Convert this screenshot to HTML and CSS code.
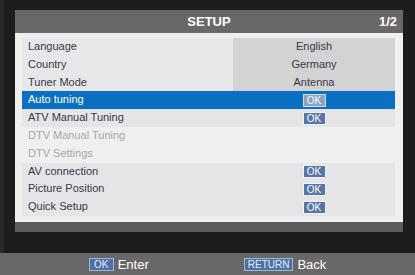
FILE: index.html
```html
<!DOCTYPE html>
<html lang="en">
<head>
    <meta charset="UTF-8">
    <title>SETUP</title>
    <link rel="stylesheet" href="styles.css">
</head>
<body>
    <div class="screen">
        <div class="panel">
            <div class="panel-head">
                <span></span>
                <span class="title">SETUP</span>
                <span class="page">1/2</span>
            </div>
            <div class="panel-body">
                <div class="row value"><span class="label">Language</span><span class="val">English</span></div>
                <div class="row value"><span class="label">Country</span><span class="val">Germany</span></div>
                <div class="row value"><span class="label">Tuner Mode</span><span class="val">Antenna</span></div>
                <div class="row action active"><span class="label">Auto tuning</span><span class="val"><span class="ok">OK</span></span></div>
                <div class="row action"><span class="label">ATV Manual Tuning</span><span class="val"><span class="ok">OK</span></span></div>
                <div class="row disabled"><span class="label">DTV Manual Tuning</span><span class="val"></span></div>
                <div class="row disabled"><span class="label">DTV Settings</span><span class="val"></span></div>
                <div class="row action"><span class="label">AV connection</span><span class="val"><span class="ok">OK</span></span></div>
                <div class="row action"><span class="label">Picture Position</span><span class="val"><span class="ok">OK</span></span></div>
                <div class="row action"><span class="label">Quick Setup</span><span class="val"><span class="ok">OK</span></span></div>
            </div>
            <div class="panel-foot"></div>
        </div>
    </div>
    <div class="hints">
        <div class="hint"><span class="key">OK</span> Enter</div>
        <div class="hint"><span class="key">RETURN</span> Back</div>
    </div>
</body>
</html>
```

FILE: styles.css
```css
body {
    margin: 0;
    width: 415px;
    height: 275px;
    overflow: hidden;
    background: #1d1d1d;
    font-family: "Liberation Sans", Arial, sans-serif;
}
.screen {
    height: 253px;
    box-sizing: border-box;
    padding: 10px 0 0 11px;
    border-left: 4px solid #2a2a2a;
}
.panel { width: 388px; }
.panel-head {
    height: 23px;
    background: #686868;
    display: grid;
    grid-template-columns: 1fr auto 1fr;
    align-items: center;
    color: #fff;
    font-weight: bold;
    font-size: 13px;
}
.panel-head .page { text-align: right; padding-right: 6px; }
.panel-body {
    background: #efefef;
    padding: 5px 8px 6px 7px;
}
.panel-foot { height: 10px; background: #5c5c5c; }
.row {
    display: grid;
    grid-template-columns: 211px 1fr;
    height: 17.8px;
    line-height: 17.8px;
    font-size: 11px;
    color: #383848;
}
.row .label { padding-left: 6px; }
.row .val {
    text-align: center;
    display: flex;
    align-items: center;
    justify-content: center;
}
.row.value .label { background: #e7e7e9; }
.row.value .val { background: #d3d3d3; }
.row.action { background: #e5e5e7; }
.row.active { background: #0b70c3; color: #fff; }
.row.disabled { color: #a8a8a8; }
.ok {
    display: inline-block;
    width: 21px;
    height: 11px;
    line-height: 11px;
    border: 1px solid #f2f4f8;
    background: #5877a7;
    color: #fff;
    font-size: 10px;
    text-align: center;
}
.row.active .ok {
    background: #8ba3c7;
    border-color: #cfe3f6;
}
.hints {
    height: 22px;
    background: #686868;
    display: flex;
    justify-content: center;
    align-items: center;
    gap: 95px;
    color: #fff;
    font-size: 13px;
}
.hint { display: flex; align-items: center; gap: 4px; }
.key {
    display: inline-block;
    height: 11px;
    line-height: 11px;
    padding: 0 3px;
    border: 1px solid #9fb6d6;
    background: #4e71a6;
    color: #e8eef7;
    font-size: 10px;
}
.hint:first-child .key { width: 17px; text-align: center; }
```
